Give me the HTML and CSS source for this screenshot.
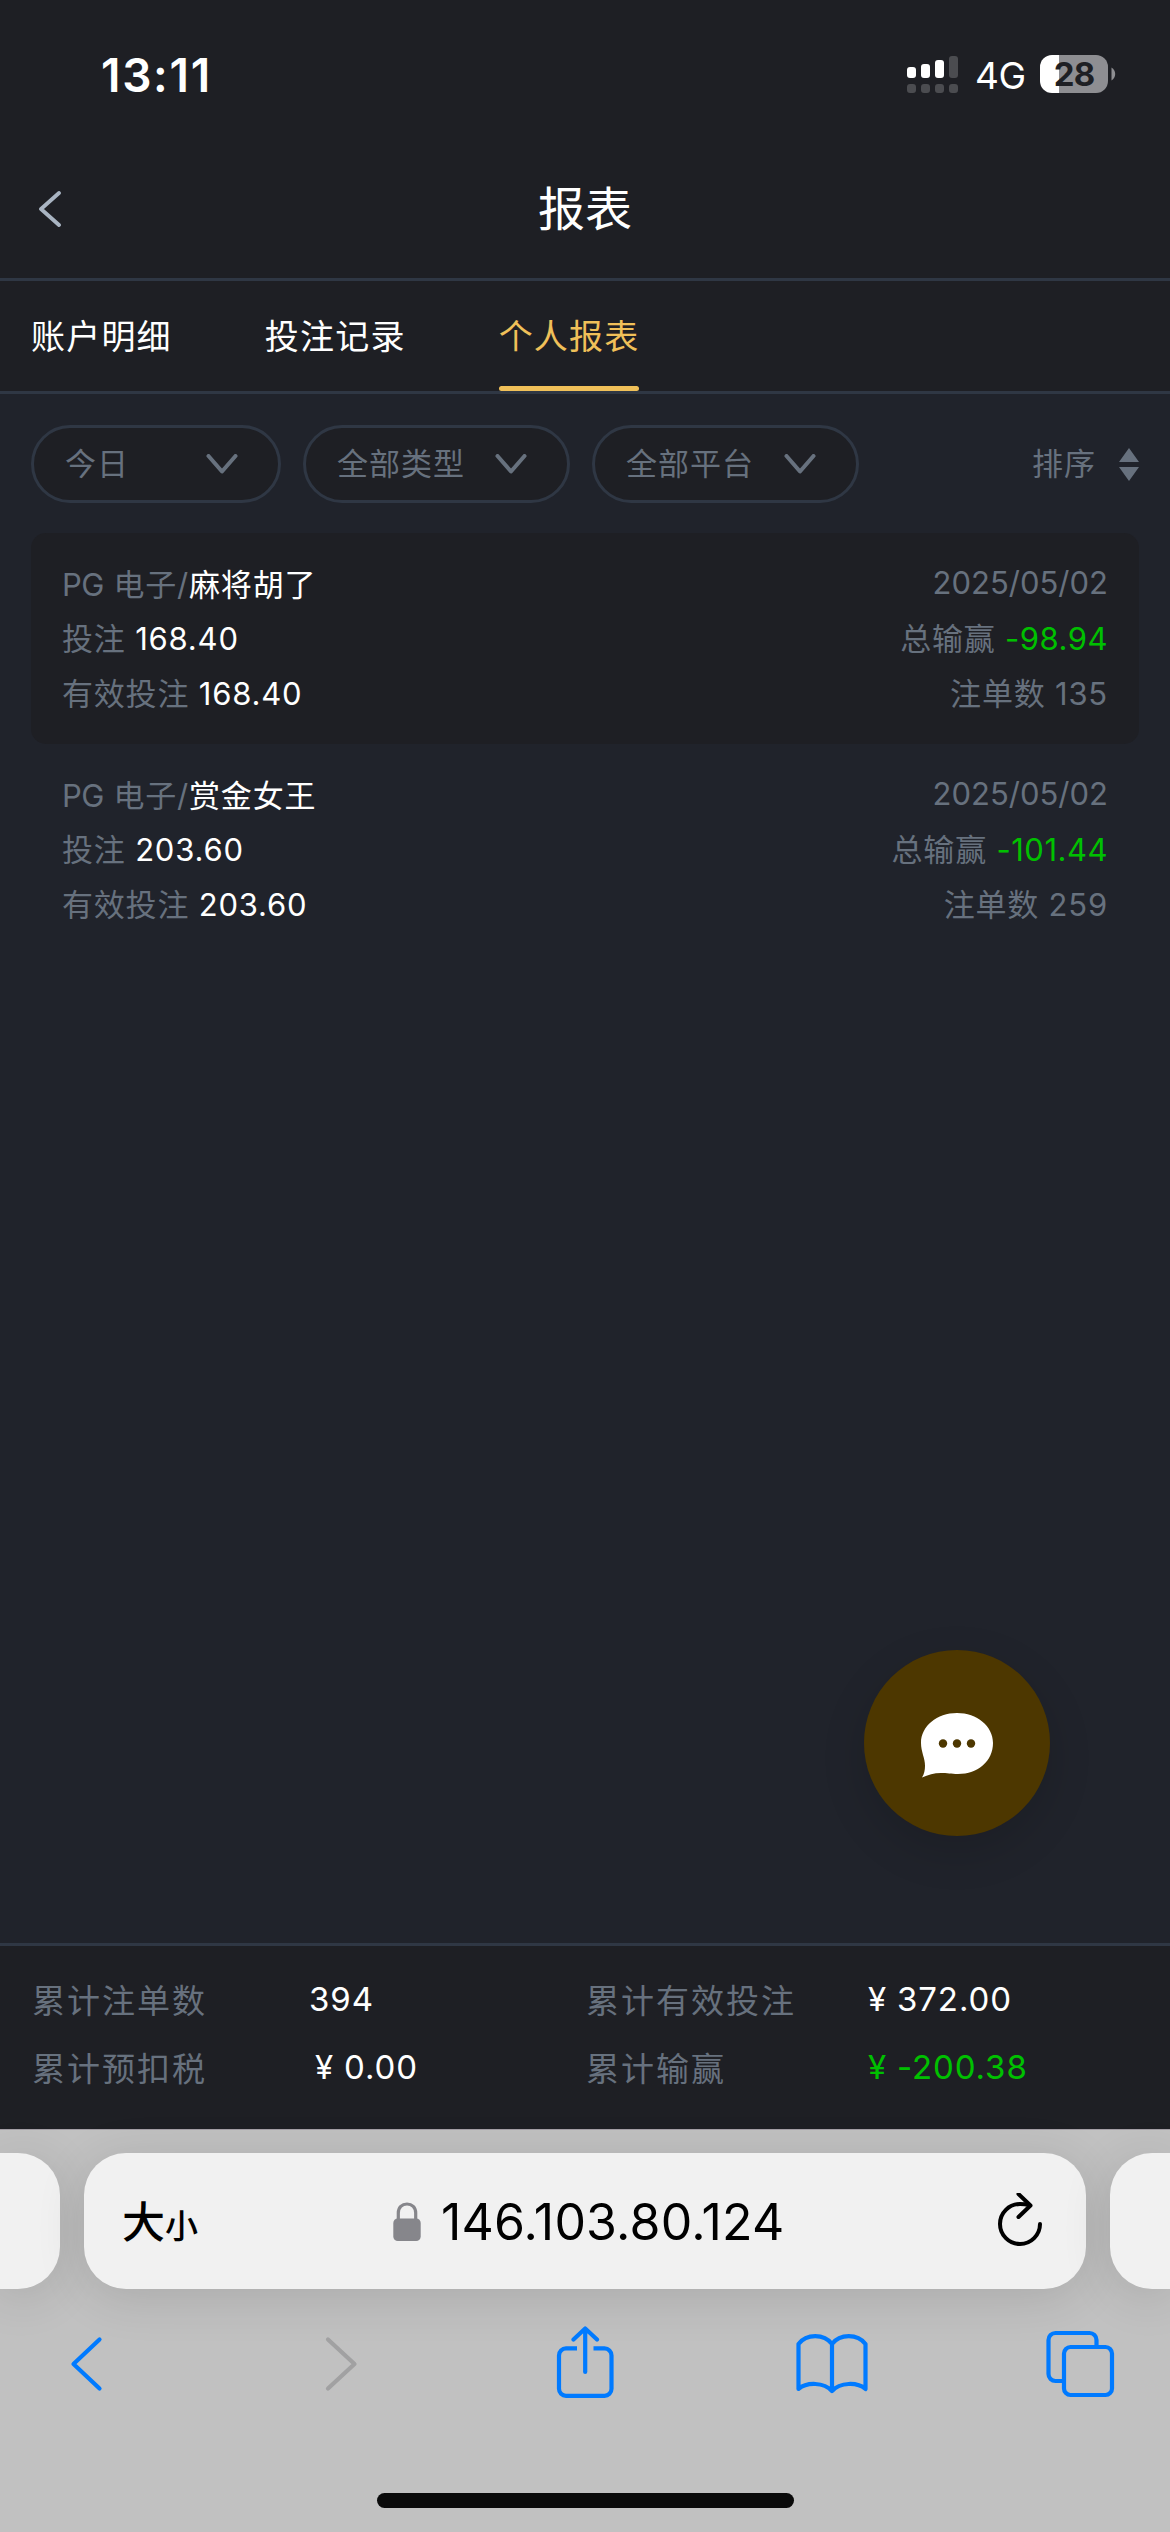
FILE: index.html
```html
<!DOCTYPE html>
<html lang="zh-CN">
<head>
<meta charset="utf-8">
<title>报表</title>
<link rel="stylesheet" href="styles.css">
</head>
<body>
<div class="screen">
  <div class="status">
    <span class="time">13:11</span>
    <div class="status-right">
      <svg class="signal" width="52" height="38" viewBox="0 0 52 38">
        <g fill="#fff"><rect x="0" y="12" width="9" height="11" rx="3"/><rect x="14" y="9" width="9" height="14" rx="3"/><rect x="28" y="5" width="9" height="18" rx="3"/></g>
        <g fill="#4b4c50"><rect x="42" y="1" width="9" height="22" rx="3"/><rect x="0" y="29" width="9" height="9" rx="3"/><rect x="14" y="29" width="9" height="9" rx="3"/><rect x="28" y="29" width="9" height="9" rx="3"/><rect x="42" y="29" width="9" height="9" rx="3"/></g>
      </svg>
      <span class="net">4G</span>
      <div class="battery"><span class="battery-num">28</span></div>
      <svg class="battery-tip" width="5" height="14" viewBox="0 0 5 14"><path d="M0.500 0.500C2.800 2 4.200 4.400 4.200 7S2.800 12 0.500 13.500Z" fill="#8e8e92"/></svg>
    </div>
  </div>

  <header class="nav">
    <svg class="nav-back" width="24" height="36" viewBox="0 0 24 36"><path d="M21 2L3 18L21 34" fill="none" stroke="#a9b4c2" stroke-width="3.800" stroke-linecap="round" stroke-linejoin="round"/></svg>
    <h1 class="nav-title">报表</h1>
  </header>

  <nav class="tabs">
    <span class="tab">账户明细</span>
    <span class="tab">投注记录</span>
    <span class="tab active">个人报表</span>
  </nav>

  <main class="content">
    <div class="filters">
      <div class="pill pill-day"><span class="label">今日</span><svg class="chev" width="32" height="20" viewBox="0 0 32 20"><path d="M2.500 2L16 17.500L29.500 2"/></svg></div>
      <div class="pill"><span class="label">全部类型</span><svg class="chev" width="32" height="20" viewBox="0 0 32 20"><path d="M2.500 2L16 17.500L29.500 2"/></svg></div>
      <div class="pill"><span class="label">全部平台</span><svg class="chev" width="32" height="20" viewBox="0 0 32 20"><path d="M2.500 2L16 17.500L29.500 2"/></svg></div>
      <div class="sort"><span class="label">排序</span><svg width="20" height="33" viewBox="0 0 20 33"><path d="M10 0L20 14H0ZM10 33L20 19H0Z" fill="#67717e"/></svg></div>
    </div>

    <section class="card shaded">
      <div class="row"><span><span class="maker">PG</span> 电子/<b>麻将胡了</b></span><span class="date">2025/05/02</span></div>
      <div class="row"><span>投注 <b>168.40</b></span><span>总输赢 <i>-98.94</i></span></div>
      <div class="row"><span>有效投注 <b>168.40</b></span><span>注单数 135</span></div>
    </section>
    <section class="card">
      <div class="row"><span><span class="maker">PG</span> 电子/<b>赏金女王</b></span><span class="date">2025/05/02</span></div>
      <div class="row"><span>投注 <b>203.60</b></span><span>总输赢 <i>-101.44</i></span></div>
      <div class="row"><span>有效投注 <b>203.60</b></span><span>注单数 259</span></div>
    </section>
  </main>

  <footer class="totals">
    <span>累计注单数</span><b>394</b><span>累计有效投注</span><b><em>¥</em>372.00</b>
    <span>累计预扣税</span><b class="inset"><em>¥</em>0.00</b><span>累计输赢</span><b class="win"><em>¥</em>-200.38</b>
  </footer>

  <div class="browser">
    <div class="bar-row">
      <div class="side side-left"></div>
      <div class="address">
        <span class="aa">大<small>小</small></span>
        <div class="host">
          <svg width="28" height="39" viewBox="0 0 28 39"><path d="M5.300 19V11C5.300 5.500 9 2 14 2S22.700 5.500 22.700 11V19" fill="none" stroke="#86868b" stroke-width="3.200"/><rect x="0.300" y="16.500" width="27.400" height="22.500" rx="4.500" fill="#86868b"/></svg>
          <span>146.103.80.124</span>
        </div>
        <svg class="reload" width="48" height="56" viewBox="0 0 48 56"><g fill="none" stroke="#000" stroke-width="4" stroke-linecap="round" stroke-linejoin="round"><path d="M44 31A20 20 0 1 1 24 11Q29 11 33 12"/><path d="M22.500 1L34.500 12.500L22.500 24"/></g></svg>
      </div>
      <div class="side side-right"></div>
    </div>
    <div class="tools">
      <svg width="70" height="70" viewBox="0 0 70 70"><path d="M48.500 10.500L22.500 35L48.500 59.500"/></svg>
      <svg class="off" width="70" height="70" viewBox="0 0 70 70"><path d="M22 10.500L48.500 35L22 59.500"/></svg>
      <svg class="share" width="70" height="76" viewBox="0 0 70 76"><path d="M27 22.400H16A7 7 0 0 0 9 29.400V62.800A7 7 0 0 0 16 69.800H54.500A7 7 0 0 0 61.500 62.800V29.400A7 7 0 0 0 54.500 22.400H43.500"/><path class="arrow" d="M35.200 46V2.800M23.500 13.500L35.200 2.500L47 13.500"/></svg>
      <svg width="76" height="70" viewBox="0 0 76 70"><path d="M38 15C30 4.500 12.500 4.500 4.500 15V60C12.500 53 30 53 38 62C46 53 63.500 53 71.500 60V15C63.500 4.500 46 4.500 38 15V61"/></svg>
      <svg width="70" height="70" viewBox="0 0 70 70"><path d="M18 52H10.500A7 7 0 0 1 3.500 45V11A7 7 0 0 1 10.500 4H44.500A7 7 0 0 1 51.500 11V17"/><rect x="19" y="18" width="48" height="48" rx="6.500"/></svg>
    </div>
    <div class="home"></div>
  </div>

  <div class="chat">
    <svg width="74" height="68" viewBox="0 0 74 68"><path d="M37 1C17 1 1 14 1 31C1 40 5 46 5 54Q5 61 2 65.500C8 63 14 61 21 61C27 61 31 62 38 62C58 62 73 49 73 31C73 14 57 1 37 1Z" fill="#fff"/><g fill="#4d3700"><circle cx="23" cy="31.500" r="4.200"/><circle cx="37" cy="31.500" r="4.200"/><circle cx="51" cy="31.500" r="4.200"/></g></svg>
  </div>
</div>
</body>
</html>
```
FILE: styles.css
```css
* { box-sizing: border-box; }
body { margin: 0; background: #20232b; }
.screen {
  position: relative;
  width: 1170px;
  height: 2532px;
  display: flex;
  flex-direction: column;
  overflow: hidden;
  background: #20232b;
  color: #67717e;
  font-family: Inter, "Noto Sans CJK SC", sans-serif;
  font-weight: 400;
  white-space: nowrap;
}
b, i, em { font-weight: inherit; font-style: normal; }
svg { display: block; flex: none; }

.status { height: 140px; background: #1e1f24; display: flex; justify-content: space-between; padding: 55px 54px 0 101px; }
.time { font-size: 46px; font-weight: 600; line-height: 40px; height: 40px; color: #fff; letter-spacing: 1.700px; }
.status-right { display: flex; align-items: center; height: 38px; }
.net { width: 65px; margin-left: 16px; font-size: 37px; line-height: 38px; color: #fff; letter-spacing: -0.300px; padding-top: 4px; }
.battery { width: 68px; height: 38px; border-radius: 12px; background: linear-gradient(90deg, #fff 19px, #8e8e92 19px); text-align: center; }
.battery-num { font-size: 33px; line-height: 38px; font-weight: 700; color: #1e1f24; letter-spacing: -1px; }
.battery-tip { margin-left: 3px; }

.nav { height: 141px; background: #1e1f24; border-bottom: 3px solid #2f3744; display: grid; grid-template-columns: 200px 1fr 200px; align-items: center; padding: 0 38px; }
.nav-title { margin: 0; text-align: center; font-size: 47px; font-weight: 400; color: #fff; line-height: 60px; }

.tabs { height: 113px; background: #1e1f24; border-bottom: 3px solid #2f3744; display: flex; gap: 93px; padding-left: 31px; }
.tab { position: relative; height: 110px; line-height: 111px; font-size: 34px; letter-spacing: 1.200px; color: #fff; }
.tab.active { color: #f0c059; }
.tab.active::after { content: ""; position: absolute; left: 0; right: 0; bottom: 0; height: 5px; border-radius: 3px; background: #f0c059; }

.content { flex: 1; padding: 31px 31px 0; }
.filters { display: flex; align-items: center; gap: 22px; height: 78px; margin-bottom: 30px; }
.pill { width: 267px; height: 78px; border: 3px solid #2f3744; border-radius: 39px; background: #1e1f24; display: flex; align-items: center; justify-content: space-between; padding: 0 40px 0 31px; font-size: 31px; letter-spacing: 1px; }
.pill-day { width: 250px; }
.label { padding-bottom: 5px; }
.chev path { fill: none; stroke: #67717e; stroke-width: 4px; stroke-linecap: round; stroke-linejoin: round; }
.sort { margin-left: auto; display: flex; align-items: center; gap: 23px; font-size: 31px; letter-spacing: 1px; }

.card { height: 211px; padding: 22px 31px; border-radius: 15px; font-size: 31px; letter-spacing: 0.800px; }
.card.shaded { background: #1e1f24; }
.row { height: 54.500px; display: flex; align-items: center; justify-content: space-between; }
.row b { color: #fff; }
.row i { color: #00c000; letter-spacing: 0.500px; }
.date { letter-spacing: 0; }
.maker { letter-spacing: -0.500px; }

.totals { height: 186px; background: #1e1f24; border-top: 3px solid #2f3744; display: grid; grid-template-columns: 277px 277px 282px 1fr; grid-template-rows: 68px 68px; align-items: center; padding: 19px 0 0 32px; font-size: 33px; letter-spacing: 2px; }
.totals b { color: #fff; letter-spacing: 0.900px; }
.totals .win { color: #00c000; }
.totals .inset { padding-left: 6px; }
.totals em { display: inline-block; width: 29px; }

.browser { height: 403px; background: #c1c1c1; border-top: 1px solid #a49fa6; display: flex; flex-direction: column; align-items: center; }
.bar-row { width: 1170px; display: flex; gap: 24px; margin-top: 23px; }
.address, .side { height: 136px; background: #f1f1f1; border-radius: 42px; box-shadow: 0 8px 50px rgba(0, 0, 0, 0.120); }
.side { width: 60px; }
.side-left { border-radius: 0 42px 42px 0; }
.side-right { border-radius: 42px 0 0 42px; }
.address { width: 1002px; display: grid; grid-template-columns: 309px 1fr auto; align-items: center; padding: 0 42px 0 0; color: #000; }
.aa { padding: 6px 0 0 38px; font-size: 43px; font-weight: 500; line-height: 50px; }
.aa small { font-size: 33px; }
.host { display: flex; align-items: center; gap: 20px; font-size: 50px; letter-spacing: 0.200px; padding-top: 1px; }
.tools { width: 1170px; display: flex; justify-content: space-between; align-items: center; margin-top: 40px; height: 70px; padding: 0 55.500px 0 51px; }
.tools svg { fill: none; stroke: #007aff; stroke-width: 4.200px; stroke-linecap: round; stroke-linejoin: round; }
.tools .share { stroke-linecap: butt; }
.tools .arrow { stroke-linecap: round; }
.tools .off { stroke: #a1a1a2; margin-left: 11px; }
.home { width: 417px; height: 15px; border-radius: 8px; background: #0a0a0a; margin-top: 94px; }

.chat { position: absolute; left: 864px; top: 1650px; width: 186px; height: 186px; border-radius: 50%; background: #4d3700; box-shadow: 0 15px 45px rgba(0, 0, 0, 0.140); display: flex; align-items: center; justify-content: center; padding-top: 6px; }
```
